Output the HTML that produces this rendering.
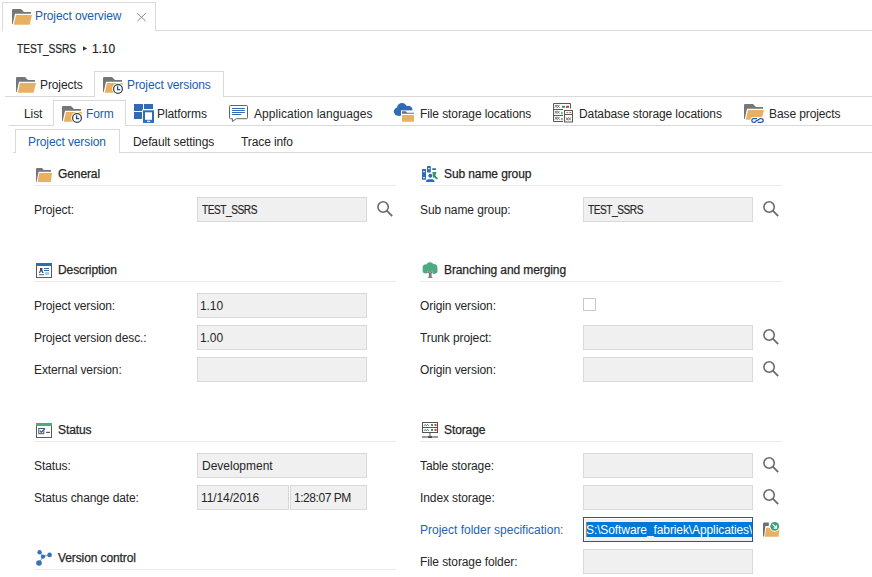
<!DOCTYPE html>
<html><head><meta charset="utf-8">
<style>
html,body{margin:0;padding:0;background:#fff;width:872px;height:577px;overflow:hidden;position:relative}
body{font-family:"Liberation Sans",sans-serif;font-size:12px;color:#262626}
.a{position:absolute}
.t{position:absolute;line-height:14px;white-space:nowrap;letter-spacing:-0.1px}
.blue{color:#1a5cad}
.hl{position:absolute;height:1px;background:#d9d9d9}
.vl{position:absolute;width:1px;background:#d9d9d9}
.sep{position:absolute;height:1px;background:#ebebeb}
.box{position:absolute;box-sizing:border-box;border:1px solid #d9d9d9;background:#f0f0f0;height:25px}
.hd{-webkit-text-stroke:0.25px #262626}
svg{position:absolute;overflow:visible}
</style></head><body>

<!-- Row 1: document tab -->
<div class="hl" style="left:2px;top:2px;width:154px"></div>
<div class="vl" style="left:2px;top:2px;height:29px"></div>
<div class="vl" style="left:155px;top:2px;height:29px"></div>
<div class="hl" style="left:155px;top:30px;width:717px"></div>
<div class="t blue" style="left:35px;top:9px">Project overview</div>
<svg style="left:137px;top:13px" width="10" height="9" viewBox="0 0 10 9"><path d="M0.3 0.3L8.7 8.2M8.7 0.3L0.3 8.2" stroke="#8c8c8c" stroke-width="1"/></svg>

<!-- breadcrumb -->
<div class="t" style="left:17px;top:42px;letter-spacing:-0.1px;transform:scaleX(0.855);transform-origin:0 0;-webkit-text-stroke:0.2px #262626">TEST_SSRS</div>
<svg style="left:83px;top:46px" width="5" height="5" viewBox="0 0 5 5"><path d="M0 0.3L4.2 2.5L0 4.7Z" fill="#333"/></svg>
<div class="t" style="left:92px;top:42px;-webkit-text-stroke:0.2px #262626">1.10</div>

<!-- Row 2 tabs -->
<div class="hl" style="left:5px;top:96px;width:90px"></div>
<div class="hl" style="left:94px;top:71px;width:130px"></div>
<div class="vl" style="left:94px;top:71px;height:26px"></div>
<div class="vl" style="left:223px;top:71px;height:26px"></div>
<div class="hl" style="left:223px;top:96px;width:649px"></div>
<div class="t" style="left:40px;top:78px">Projects</div>
<div class="t blue" style="left:127px;top:78px">Project versions</div>

<!-- Row 3 tabs -->
<div class="hl" style="left:9px;top:125px;width:45px"></div>
<div class="hl" style="left:53px;top:100px;width:73px"></div>
<div class="vl" style="left:53px;top:100px;height:26px"></div>
<div class="vl" style="left:125px;top:100px;height:26px"></div>
<div class="hl" style="left:125px;top:125px;width:747px"></div>
<div class="t" style="left:24px;top:107px">List</div>
<div class="t blue" style="left:86px;top:107px">Form</div>
<div class="t" style="left:157px;top:107px">Platforms</div>
<div class="t" style="left:254px;top:107px;letter-spacing:0.05px">Application languages</div>
<div class="t" style="left:420px;top:107px">File storage locations</div>
<div class="t" style="left:579px;top:107px">Database storage locations</div>
<div class="t" style="left:769px;top:107px">Base projects</div>

<!-- Row 4 tabs -->
<div class="hl" style="left:13px;top:152px;width:3px"></div>
<div class="hl" style="left:15px;top:129px;width:105px"></div>
<div class="vl" style="left:15px;top:129px;height:24px"></div>
<div class="vl" style="left:119px;top:129px;height:24px"></div>
<div class="hl" style="left:119px;top:152px;width:753px"></div>
<div class="t blue" style="left:28px;top:135px">Project version</div>
<div class="t" style="left:133px;top:135px">Default settings</div>
<div class="t" style="left:241px;top:135px">Trace info</div>

<!-- LEFT COLUMN -->
<div class="t hd" style="left:58px;top:167px">General</div>
<div class="sep" style="left:34px;top:185px;width:362px"></div>
<div class="t" style="left:34px;top:203px">Project:</div>
<div class="box" style="left:197px;top:197px;width:170px"></div>
<div class="t" style="left:202px;top:203px;letter-spacing:-0.6px;transform:scaleX(0.85);transform-origin:0 0;-webkit-text-stroke:0.15px #262626">TEST_SSRS</div>

<div class="t hd" style="left:58px;top:263px">Description</div>
<div class="sep" style="left:34px;top:281px;width:362px"></div>
<div class="t" style="left:34px;top:299px">Project version:</div>
<div class="box" style="left:197px;top:293px;width:170px"></div>
<div class="t" style="left:200px;top:299px">1.10</div>
<div class="t" style="left:34px;top:331px">Project version desc.:</div>
<div class="box" style="left:197px;top:325px;width:170px"></div>
<div class="t" style="left:200px;top:331px">1.00</div>
<div class="t" style="left:34px;top:363px">External version:</div>
<div class="box" style="left:197px;top:357px;width:170px"></div>

<div class="t hd" style="left:58px;top:423px">Status</div>
<div class="sep" style="left:34px;top:441px;width:362px"></div>
<div class="t" style="left:34px;top:459px">Status:</div>
<div class="box" style="left:197px;top:453px;width:170px"></div>
<div class="t" style="left:202px;top:459px;letter-spacing:0">Development</div>
<div class="t" style="left:34px;top:491px">Status change date:</div>
<div class="box" style="left:197px;top:485px;width:92px"></div>
<div class="t" style="left:201px;top:491px">11/14/2016</div>
<div class="box" style="left:290px;top:485px;width:77px"></div>
<div class="t" style="left:294px;top:491px;letter-spacing:-0.45px">1:28:07 PM</div>

<div class="t hd" style="left:58px;top:551px">Version control</div>
<div class="sep" style="left:34px;top:569px;width:362px"></div>

<!-- RIGHT COLUMN -->
<div class="t hd" style="left:444px;top:167px">Sub name group</div>
<div class="sep" style="left:420px;top:185px;width:362px"></div>
<div class="t" style="left:420px;top:203px">Sub name group:</div>
<div class="box" style="left:583px;top:197px;width:170px"></div>
<div class="t" style="left:588px;top:203px;letter-spacing:-0.6px;transform:scaleX(0.85);transform-origin:0 0;-webkit-text-stroke:0.15px #262626">TEST_SSRS</div>

<div class="t hd" style="left:444px;top:263px">Branching and merging</div>
<div class="sep" style="left:420px;top:281px;width:362px"></div>
<div class="t" style="left:420px;top:299px">Origin version:</div>
<div class="a" style="left:583px;top:298px;width:11px;height:11px;border:1px solid #c8c8c8;background:#fff"></div>
<div class="t" style="left:420px;top:331px">Trunk project:</div>
<div class="box" style="left:583px;top:325px;width:170px"></div>
<div class="t" style="left:420px;top:363px">Origin version:</div>
<div class="box" style="left:583px;top:357px;width:170px"></div>

<div class="t hd" style="left:444px;top:423px">Storage</div>
<div class="sep" style="left:420px;top:441px;width:362px"></div>
<div class="t" style="left:420px;top:459px">Table storage:</div>
<div class="box" style="left:583px;top:453px;width:170px"></div>
<div class="t" style="left:420px;top:491px">Index storage:</div>
<div class="box" style="left:583px;top:485px;width:170px"></div>
<div class="t blue" style="left:420px;top:523px;letter-spacing:0;color:#2462ae">Project folder specification:</div>
<div class="box" style="left:583px;top:517px;width:170px;border-color:#1f5aa6;background:#f0f0f0;box-shadow:inset 1px 1px 0 #fff"></div>
<div class="a" style="left:586px;top:522px;width:166px;height:15px;background:#0078d7;overflow:hidden"><div class="t" style="left:0px;top:1px;color:#fff">S:\Software_fabriek\Applicaties\</div></div>
<div class="a" style="left:586px;top:522px;width:1px;height:15px;background:#f07020"></div>
<div class="t" style="left:420px;top:555px">File storage folder:</div>
<div class="box" style="left:583px;top:549px;width:170px"></div>


<!-- ICONS -->
<svg style="left:12px;top:9px" width="21" height="16" viewBox="0 0 21 16"><path d="M0 1.2Q0 0 1.2 0H9L12 3H19V4.8H3L0.7 15H0Z" fill="#767676"/><path d="M4 6H20L17.6 15.8H1.8Z" fill="#e8b060"/></svg>
<svg style="left:16px;top:77px" width="21" height="16" viewBox="0 0 21 16"><path d="M0 1.2Q0 0 1.2 0H9L12 3H19V4.8H3L0.7 15H0Z" fill="#767676"/><path d="M4 6H20L17.6 15.8H1.8Z" fill="#e8b060"/></svg>
<svg style="left:103px;top:77px" width="21" height="18" viewBox="0 0 21 18"><path d="M0 1.2Q0 0 1.2 0H9L12 3H19V4.8H3L0.7 15H0Z" fill="#767676"/><path d="M4 6H20L17.6 15.8H1.8Z" fill="#e8b060"/><circle cx="15" cy="12" r="5.9" fill="#fff"/><circle cx="15" cy="12" r="4.4" fill="#fff" stroke="#3c3c3c" stroke-width="1.2"/><path d="M14.6 9.3V12.6H17.2" stroke="#1b4c9c" stroke-width="1.3" fill="none"/></svg>
<svg style="left:62px;top:106px" width="21" height="18" viewBox="0 0 21 18"><path d="M0 1.2Q0 0 1.2 0H9L12 3H19V4.8H3L0.7 15H0Z" fill="#767676"/><path d="M4 6H20L17.6 15.8H1.8Z" fill="#e8b060"/><circle cx="15" cy="12" r="5.9" fill="#fff"/><circle cx="15" cy="12" r="4.4" fill="#fff" stroke="#3c3c3c" stroke-width="1.2"/><path d="M14.6 9.3V12.6H17.2" stroke="#1b4c9c" stroke-width="1.3" fill="none"/></svg>
<svg style="left:134px;top:104px" width="21" height="20" viewBox="0 0 21 20"><g fill="#2f6cb3"><rect x="0" y="0" width="9" height="7"/><rect x="10" y="0" width="9" height="5"/><rect x="0" y="8" width="8" height="7"/></g><rect x="8.2" y="5.5" width="12.6" height="14" fill="#fff"/><rect x="10" y="7.3" width="9" height="10.4" fill="#fff" stroke="#2f6cb3" stroke-width="2"/><rect x="9" y="15.8" width="11" height="3" fill="#2f6cb3"/><rect x="13" y="16.7" width="3.2" height="1.1" fill="#fff"/></svg>
<svg style="left:229px;top:105px" width="20" height="18" viewBox="0 0 20 18"><path d="M1.5 0.5H17.5Q18.5 0.5 18.5 1.5V12.7Q18.5 13.7 17.5 13.7H7.3L3.4 16.5V13.7H1.5Q0.5 13.7 0.5 12.7V1.5Q0.5 0.5 1.5 0.5Z" fill="#fff" stroke="#626262" stroke-width="1"/><g stroke="#2f6cb3" stroke-width="1.1"><path d="M3 3.5H15.8M3 5.5H15.8M3 7.5H15.8M3 9.5H12.2"/></g></svg>
<svg style="left:394px;top:103px" width="21" height="20" viewBox="0 0 21 20"><g fill="#2f6cb3"><circle cx="8" cy="5" r="5"/><circle cx="14.3" cy="7" r="4.2"/><circle cx="4" cy="8.6" r="4.2"/><rect x="4" y="6" width="12" height="6.8"/></g><rect x="7" y="7.4" width="14" height="13" fill="#fff"/><path d="M8 8.3H11.8L13.2 9.8H20V10.7H8Z" fill="#6e6e6e"/><rect x="8" y="12.1" width="12" height="6.7" rx="0.8" fill="#e8b060"/></svg>
<svg style="left:553px;top:103px" width="21" height="20" viewBox="0 0 21 20"><g fill="none" stroke="#595959" stroke-width="1"><path d="M10 18.5H0.5V0.5H17.5V5.5"/><path d="M0.5 6.5H10M0.5 12.5H10"/><rect x="11.5" y="7.5" width="8" height="11.5"/><path d="M11.5 11.5H19.5"/></g><g stroke="#5a5a5a" stroke-width="0.8" fill="none"><path d="M1.8 1.9L4.2 4.7M1.8 4.7L4.2 1.9M4.2 1.9L6.6 4.7M4.2 4.7L6.6 1.9 M1.8 7.9L4.2 10.7M1.8 10.7L4.2 7.9M4.2 7.9L6.6 10.7M4.2 10.7L6.6 7.9 M1.8 13.9L4.2 16.7M1.8 16.7L4.2 13.9M4.2 13.9L6.6 16.7M4.2 16.7L6.6 13.9 M13 14.5L15.4 17.3M13 17.3L15.4 14.5M15.4 14.5L17.8 17.3M15.4 17.3L17.8 14.5"/></g><rect x="9" y="2.8" width="3" height="2" fill="#2d9a5e"/><rect x="13" y="2.8" width="3" height="2" fill="#d23a2a"/><rect x="8.3" y="8.8" width="1.2" height="2.5" fill="#2d9a5e"/><rect x="8.3" y="14.8" width="1.2" height="2.5" fill="#2d9a5e"/><rect x="13.3" y="9.2" width="2" height="0.9" fill="#777"/><rect x="16.3" y="9.2" width="2" height="0.9" fill="#d23a2a"/></svg>
<svg style="left:744px;top:104px" width="21" height="20" viewBox="0 0 21 20"><path d="M0 1.2Q0 0 1.2 0H9L12 3H19V4.8H3L0.7 15H0Z" fill="#767676"/><path d="M4 6H20L17.6 15.8H1.8Z" fill="#e8b060"/><path d="M6.5 20V15.5Q6.5 13 9 13H21V20Z" fill="#fff"/><g fill="none" stroke="#1f5aa8" stroke-width="1.3"><path d="M13 14.7H9.6Q7.8 14.7 7.8 16.5Q7.8 18.3 9.6 18.3H11.5"/><path d="M13.6 18.3H17.4Q19.2 18.3 19.2 16.5Q19.2 14.7 17.4 14.7H15.5"/><path d="M11 17.6L15.6 15.2"/></g></svg>

<svg style="left:36px;top:168px" width="17" height="14" viewBox="0 0 17 14"><path d="M0 1Q0 0 1 0H6L7.8 2H15V3.8H2.6L0.6 13.7H0Z" fill="#767676"/><path d="M3.25 5.1H16L14.9 13.9H1.7Z" fill="#e8b060"/></svg>
<svg style="left:36px;top:263px" width="16" height="15" viewBox="0 0 16 15"><rect x="0.5" y="0.5" width="15" height="14" fill="#fff" stroke="#5a5a5a" stroke-width="1"/><rect x="0" y="0" width="16" height="3" fill="#2f6cb3"/><path d="M4 5H6.4V7.3L7.6 10H6.3L5.7 8.6H4.7L4.1 10H2.8L4 7.3Z" fill="#4a4a4a"/><g stroke="#2f6cb3" stroke-width="1"><path d="M8 5.5H13M8 7.5H13M3 11.7H8"/></g><rect x="9" y="9" width="4.2" height="3" fill="#9fd0f2"/></svg>
<svg style="left:36px;top:423px" width="16" height="15" viewBox="0 0 16 15"><rect x="0.5" y="0.5" width="15" height="14" fill="#fff" stroke="#5a5a5a" stroke-width="1"/><rect x="0" y="0" width="16" height="3" fill="#4fa97c"/><rect x="2.8" y="5.5" width="5" height="5.2" fill="none" stroke="#555" stroke-width="1"/><path d="M4 7.7L5.3 9.5L9 5.3" stroke="#2f6cb3" stroke-width="1.4" fill="none"/><path d="M10 9.3H14" stroke="#333" stroke-width="1"/></svg>
<svg style="left:36px;top:549px" width="16" height="18" viewBox="0 0 16 18"><g stroke="#a8998a" stroke-width="1"><path d="M7 7.6L3.6 3.2M7 7.6L13.6 5.9M7 7.6L3 14"/></g><g fill="#3572bb"><circle cx="3.6" cy="3.2" r="2.2"/><circle cx="7" cy="7.6" r="2.2"/><circle cx="13.6" cy="5.9" r="2.3"/><circle cx="3" cy="14" r="2.8"/></g></svg>

<svg style="left:422px;top:166px" width="17" height="17" viewBox="0 0 17 17"><g fill="#2f6cb3"><rect x="0" y="3" width="4" height="10.8" rx="0.6"/><rect x="5" y="0" width="3.8" height="6.5" rx="0.6"/><rect x="10.2" y="2.2" width="3.8" height="1.8" rx="0.5"/><circle cx="8.3" cy="9.7" r="2"/><path d="M4 16Q4 13.3 6.3 13.3H10.3Q12.5 13.3 12.5 16Z"/></g><g fill="#fff"><rect x="1" y="5.2" width="2" height="1"/><rect x="1" y="11.2" width="2" height="1"/><rect x="6" y="2.2" width="1.8" height="1"/></g><path d="M10.5 6H14.5L13.4 9.5L16 12.5L14.8 13.5L12 11.3L11 12Z" fill="#2f9a63"/></svg>
<svg style="left:422px;top:262px" width="17" height="17" viewBox="0 0 17 17"><g fill="#4daa82"><circle cx="8" cy="3.5" r="3.3"/><circle cx="4.2" cy="5.8" r="3.6"/><circle cx="11.8" cy="5.6" r="3.6"/><circle cx="3.6" cy="8.5" r="3"/><circle cx="12.3" cy="8.6" r="3.3"/><circle cx="8" cy="8" r="3"/></g><path d="M5.2 9.2L6.4 11.2V14.9L5 16H11.4L10 14.9V11.2L11.2 9.2L10.2 8.8L8.2 10.4L6.2 8.8Z" fill="#fff"/><path d="M5.7 9.3L6.8 11.2V15L5.4 16H11L9.6 15V11.2L10.7 9.3L9.9 9L8.2 10.8L6.5 9Z" fill="#7a7a7a"/><path d="M6 9.4L6.9 11M10.4 9.4L9.5 11" stroke="#8a5a6a" stroke-width="0.8"/></svg>
<svg style="left:422px;top:422px" width="17" height="17" viewBox="0 0 17 17"><g fill="none" stroke="#555" stroke-width="1"><rect x="0.5" y="0.5" width="15" height="10"/><path d="M0.5 5.5H15.5"/><path d="M8 11V14"/></g><g stroke="#555" stroke-width="0.9" fill="none"><path d="M2 3.8L3.2 2.4L4.4 3.8L5.6 2.4L6.8 3.8"/><path d="M2 8.8L3.2 7.4L4.4 8.8L5.6 7.4L6.8 8.8"/></g><g fill="#2d9a5e"><rect x="9" y="2" width="2" height="2"/><rect x="9" y="7" width="2" height="2"/></g><g fill="#d23a2a"><rect x="12.5" y="2" width="2" height="2"/><rect x="12.5" y="7" width="2" height="2"/></g><rect x="0" y="14" width="16" height="2" fill="#9a9a9a"/><rect x="5.5" y="14" width="5" height="2" fill="#555"/><rect x="4.8" y="14" width="0.7" height="2" fill="#b8e8cf"/><rect x="10.5" y="14" width="0.7" height="2" fill="#b8e8cf"/></svg>
<svg style="left:376px;top:200px" width="18" height="18" viewBox="0 0 18 18"><circle cx="7.1" cy="7" r="5.2" fill="none" stroke="#6b6b6b" stroke-width="1.6"/><path d="M10.8 10.7L16.2 16.1" stroke="#6b6b6b" stroke-width="1.8"/></svg>
<svg style="left:762px;top:200px" width="18" height="18" viewBox="0 0 18 18"><circle cx="7.1" cy="7" r="5.2" fill="none" stroke="#6b6b6b" stroke-width="1.6"/><path d="M10.8 10.7L16.2 16.1" stroke="#6b6b6b" stroke-width="1.8"/></svg>
<svg style="left:762px;top:328px" width="18" height="18" viewBox="0 0 18 18"><circle cx="7.1" cy="7" r="5.2" fill="none" stroke="#6b6b6b" stroke-width="1.6"/><path d="M10.8 10.7L16.2 16.1" stroke="#6b6b6b" stroke-width="1.8"/></svg>
<svg style="left:762px;top:360px" width="18" height="18" viewBox="0 0 18 18"><circle cx="7.1" cy="7" r="5.2" fill="none" stroke="#6b6b6b" stroke-width="1.6"/><path d="M10.8 10.7L16.2 16.1" stroke="#6b6b6b" stroke-width="1.8"/></svg>
<svg style="left:762px;top:456px" width="18" height="18" viewBox="0 0 18 18"><circle cx="7.1" cy="7" r="5.2" fill="none" stroke="#6b6b6b" stroke-width="1.6"/><path d="M10.8 10.7L16.2 16.1" stroke="#6b6b6b" stroke-width="1.8"/></svg>
<svg style="left:762px;top:488px" width="18" height="18" viewBox="0 0 18 18"><circle cx="7.1" cy="7" r="5.2" fill="none" stroke="#6b6b6b" stroke-width="1.6"/><path d="M10.8 10.7L16.2 16.1" stroke="#6b6b6b" stroke-width="1.8"/></svg>
<svg style="left:763px;top:521px" width="18" height="17" viewBox="0 0 18 17"><path d="M0 3Q0 1.6 1.4 1.6H5.8V5H2.4L1.1 15.5H0Z" fill="#6e6e6e"/><path d="M3.2 6.8H16.5L15.6 15.7H1.8Z" fill="#e8b060"/><circle cx="11.7" cy="5.3" r="5.4" fill="#fff"/><circle cx="11.7" cy="5.3" r="4.4" fill="#3aa077"/><path d="M9.6 3.2L13.3 6.9M13.5 4.3V7.1H10.7" stroke="#fff" stroke-width="1.2" fill="none"/></svg>
</body></html>
